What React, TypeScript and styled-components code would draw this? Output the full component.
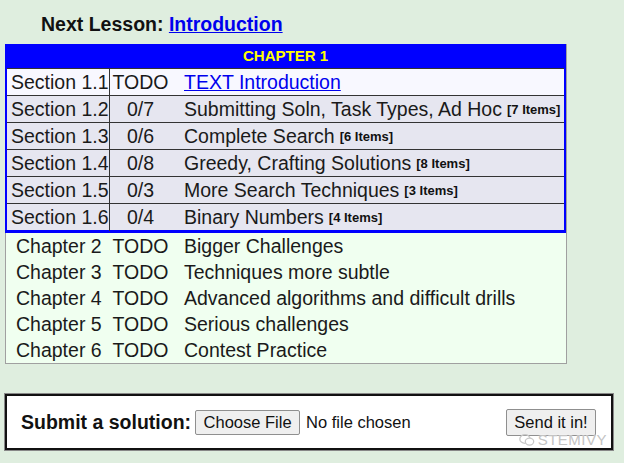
import React from 'react';
import styled, { createGlobalStyle } from 'styled-components';

const GlobalStyle = createGlobalStyle`
  html, body {
    margin: 0;
    padding: 0;
    background: #dfeedf;
  }
  body {
    font-family: 'Liberation Sans', Arial, sans-serif;
    color: #1a1a1a;
  }
`;

interface Section {
  id: string;
  progress: string;
  title: string;
  items?: number;
  link?: boolean;
}

const sections: Section[] = [
  { id: '1.1', progress: 'TODO', title: 'TEXT Introduction', link: true },
  { id: '1.2', progress: '0/7', title: 'Submitting Soln, Task Types, Ad Hoc', items: 7 },
  { id: '1.3', progress: '0/6', title: 'Complete Search', items: 6 },
  { id: '1.4', progress: '0/8', title: 'Greedy, Crafting Solutions', items: 8 },
  { id: '1.5', progress: '0/3', title: 'More Search Techniques', items: 3 },
  { id: '1.6', progress: '0/4', title: 'Binary Numbers', items: 4 },
];

const chapters = [
  { n: 2, title: 'Bigger Challenges' },
  { n: 3, title: 'Techniques more subtle' },
  { n: 4, title: 'Advanced algorithms and difficult drills' },
  { n: 5, title: 'Serious challenges' },
  { n: 6, title: 'Contest Practice' },
];

const App = () => {
  return (
    <Page>
      <GlobalStyle />
      <NextLesson>
        Next Lesson: <LessonLink href="#">Introduction</LessonLink>
      </NextLesson>
      <Contents>
        <ChapterBox>
          <ChapterHeader>CHAPTER 1</ChapterHeader>
          {sections.map((s, i) => (
            <SectionRow key={s.id} $first={i === 0}>
              <SectionName>Section {s.id}</SectionName>
              <Progress>{s.progress}</Progress>
              <SectionTitle>
                {s.link ? <TitleLink href="#">{s.title}</TitleLink> : s.title}
                {s.items !== undefined && <Items>[{s.items} Items]</Items>}
              </SectionTitle>
            </SectionRow>
          ))}
        </ChapterBox>
        {chapters.map((c) => (
          <ChapterRow key={c.n}>
            <ChapterName>Chapter {c.n}</ChapterName>
            <Progress>TODO</Progress>
            <ChapterTitle>{c.title}</ChapterTitle>
          </ChapterRow>
        ))}
      </Contents>
      <SubmitBox>
        <SubmitLabel>Submit a solution:</SubmitLabel>
        <FileButton type="button">Choose File</FileButton>
        <FileStatus>No file chosen</FileStatus>
        <SendButton type="button">Send it in!</SendButton>
        <Watermark>
          <svg width="16" height="14" viewBox="0 0 16 14">
            <ellipse cx="6" cy="6" rx="5.2" ry="4.4" fill="none" stroke="#c8c8c8" strokeWidth="1.3" />
            <ellipse cx="10.5" cy="8.6" rx="4.2" ry="3.5" fill="#fff" stroke="#c8c8c8" strokeWidth="1.3" />
          </svg>
          STEMIVY
        </Watermark>
      </SubmitBox>
    </Page>
  );
};

export default App;

const Page = styled.div`
  width: 624px;
  height: 463px;
  padding-top: 13px;
  box-sizing: border-box;
`;

const NextLesson = styled.div`
  padding-left: 41px;
  font-size: 19.5px;
  font-weight: bold;
  color: #111;
  line-height: 22px;
`;

const LessonLink = styled.a`
  color: #0000ee;
  text-decoration: underline;
`;

const Contents = styled.div`
  margin-top: 9px;
  margin-left: 5px;
  width: 562px;
  box-sizing: border-box;
  background: #f0fff0;
  border: 1px solid #a0a0a0;
  border-top: none;
`;

const ChapterBox = styled.div`
  margin-left: -1px;
  border: 2px solid #0000ff;
  border-top: none;
  border-bottom-width: 3px;
`;

const ChapterHeader = styled.div`
  height: 24px;
  background: #0000ff;
  color: #ffff00;
  font-size: 15px;
  font-weight: bold;
  text-align: center;
  line-height: 24px;
`;

const SectionRow = styled.div<{ $first: boolean }>`
  display: grid;
  grid-template-columns: 103px 61px 1fr;
  height: 27px;
  box-sizing: border-box;
  border-top: 1px solid #333;
  background: ${(p) => (p.$first ? '#f8f8ff' : '#e6e6f0')};
  font-size: 19.5px;
  line-height: 26px;
`;

const SectionName = styled.div`
  padding-left: 4px;
  border-right: 1px solid #333;
  white-space: nowrap;
`;

const Progress = styled.div`
  text-align: center;
  white-space: nowrap;
`;

const SectionTitle = styled.div`
  padding-left: 13px;
  white-space: nowrap;
`;

const TitleLink = styled.a`
  color: #0000ee;
  text-decoration: underline;
`;

const Items = styled.span`
  margin-left: 5px;
  font-size: 13px;
  font-weight: bold;
  color: #111;
  vertical-align: 2px;
`;

const ChapterRow = styled.div`
  display: grid;
  grid-template-columns: 104px 61px 1fr;
  height: 26px;
  font-size: 19.5px;
  line-height: 26px;
  color: #1a1a1a;
  &:first-of-type {
    margin-top: 1px;
  }
`;

const ChapterName = styled.div`
  padding-left: 10px;
  white-space: nowrap;
`;

const ChapterTitle = styled.div`
  padding-left: 13px;
  white-space: nowrap;
`;

const SubmitBox = styled.div`
  position: relative;
  margin-top: 30px;
  margin-left: 5px;
  width: 608px;
  height: 56px;
  box-sizing: border-box;
  border: 2px solid #111;
  box-shadow: 0 0 0 1px #888;
  background: #fff;
  display: flex;
  align-items: center;
  padding: 0 15px 0 14px;
`;

const SubmitLabel = styled.span`
  font-size: 19.5px;
  font-weight: bold;
  color: #111;
  margin-right: 4px;
  white-space: nowrap;
`;

const FileButton = styled.button`
  font-family: 'Liberation Sans', Arial, sans-serif;
  font-size: 16.5px;
  height: 25px;
  width: 105px;
  padding: 0;
  background: #efefef;
  border: 1px solid #8f8f8f;
  border-radius: 2px;
  color: #111;
`;

const FileStatus = styled.span`
  margin-left: 6px;
  font-size: 16.5px;
  color: #111;
  flex: 1;
`;

const SendButton = styled.button`
  font-family: 'Liberation Sans', Arial, sans-serif;
  font-size: 16.5px;
  height: 27px;
  width: 90px;
  padding: 0;
  background: #efefef;
  border: 1px solid #8f8f8f;
  border-radius: 2px;
  color: #111;
`;

const Watermark = styled.div`
  position: absolute;
  right: 4px;
  bottom: 0px;
  display: flex;
  align-items: center;
  gap: 3px;
  font-size: 15px;
  letter-spacing: 0.5px;
  color: #c4c4c4;
  text-shadow: 0 0 2px #fff;
`;
